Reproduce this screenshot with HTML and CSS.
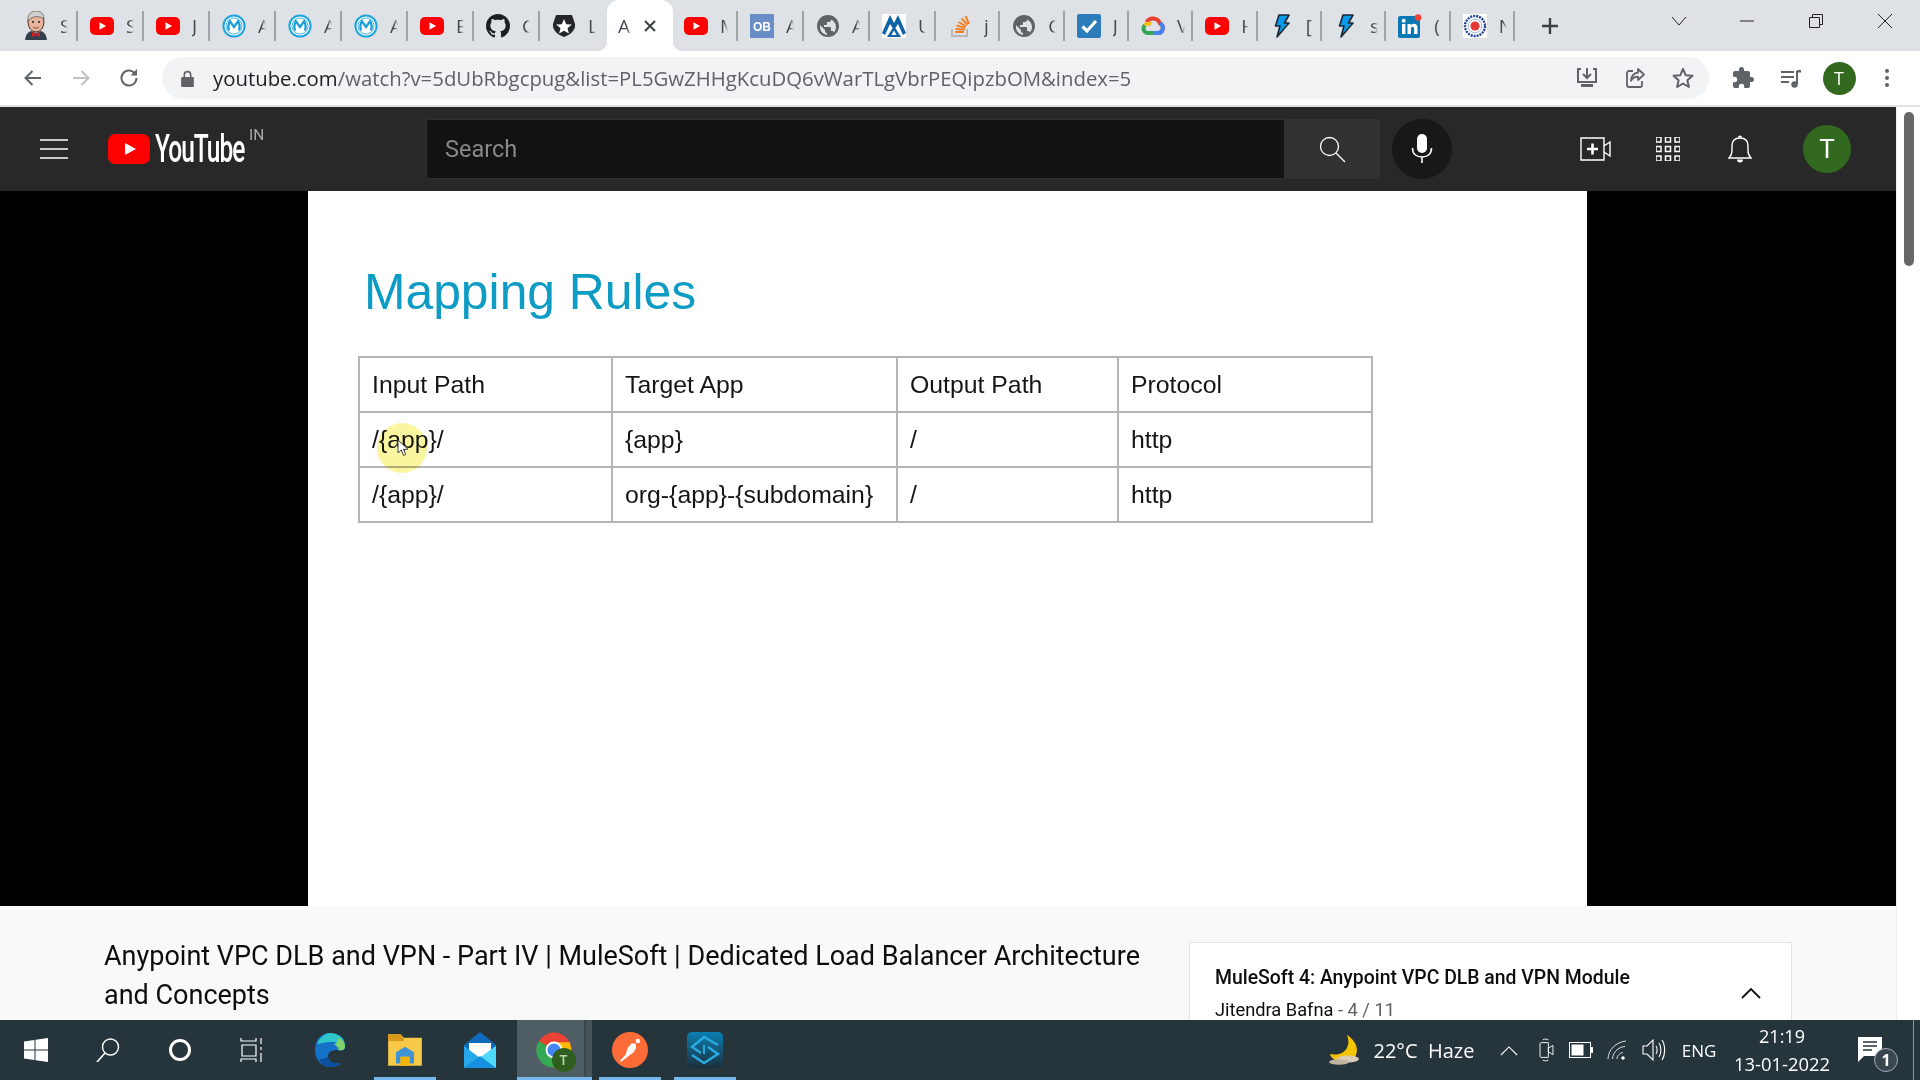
FILE: index.html
```html
<!DOCTYPE html>
<html lang="en">
<head>
  <meta charset="UTF-8" />
  <meta name="viewport" content="width=device-width, initial-scale=1.0"/>
  <title>Anypoint VPC DLB and VPN - Part IV | MuleSoft - YouTube</title>
  <link rel="stylesheet" href="styles.css">
</head>
<body>

  <!-- favicons used more than once -->
  <svg class="defs" aria-hidden="true">
    <symbol id="fav-yt" viewBox="0 0 24 24">
      <rect x="0" y="3" width="24" height="18" rx="5" fill="#f00"/>
      <path d="M9.500 8.200v7.600l6.600-3.800z" fill="#fff"/>
    </symbol>
    <symbol id="fav-mule" viewBox="0 0 24 24">
      <circle cx="12" cy="12" r="10.600" fill="#fff" stroke="#1ea5de" stroke-width="2"/>
      <circle cx="12" cy="12" r="8" fill="none" stroke="#1ea5de" stroke-width="0.800"/>
      <path d="M7 16.500c-1-3.600-.6-6.800.8-9.300L12 13l4.200-5.800c1.400 2.500 1.800 5.700.8 9.300" fill="none" stroke="#1b9fd8" stroke-width="2.300"/>
    </symbol>
    <symbol id="fav-globe" viewBox="0 0 24 24">
      <path fill="#5f6368" d="M12 1C5.900 1 1 5.900 1 12s4.900 11 11 11 11-4.900 11-11S18.100 1 12 1zm-1 19.900c-3.950-.5-7-3.850-7-7.900 0-.62.08-1.210.21-1.790L9 16v1c0 1.100.9 2 2 2v1.900zm6.900-2.500c-.26-.81-1-1.400-1.900-1.400h-1v-3c0-.55-.45-1-1-1H8v-2h2c.55 0 1-.45 1-1V8h2c1.100 0 2-.9 2-2v-.41c2.930 1.190 5 4.060 5 7.410 0 2.080-.8 3.970-2.100 5.400z"/>
    </symbol>
    <symbol id="fav-bolt" viewBox="0 0 24 24">
      <path d="M9 1h10l-4.500 8H19L7 23l3-11H5.500z" fill="#0a9bea" stroke="#1a2a38" stroke-width="1.600" stroke-linejoin="round"/>
    </symbol>
    <symbol id="tb-win" viewBox="0 0 24 24">
      <path fill="#fff" d="M0 3.500 10.500 2v9.500H0zM11.500 1.800 24 0v11.500H11.500zM0 12.500h10.500V22L0 20.500zM11.500 12.500H24V24l-12.500-1.800z"/>
    </symbol>
    <linearGradient id="st-fill" x1="0" y1="0" x2="0" y2="1">
      <stop offset="0" stop-color="#0c7fb3"/>
      <stop offset="1" stop-color="#1b2f3d"/>
    </linearGradient>
  </svg>

  <div class="tabstrip">
    <div class="tab">
      <svg class="favicon favicon-tall" viewBox="0 0 24 30"><path d="M1 29c1-6 3-8 6-9l5 2 5-2c3 1 5 3 6 9z" fill="#33414f"/><ellipse cx="12" cy="11" rx="8" ry="10" fill="#e6b49a" stroke="#4a3428" stroke-width="1"/><path d="M4 10C3 3 8 0 12 0s8 2 8 8c-4-3-11-4-16 2z" fill="#cfcfcf" stroke="#4a3428" stroke-width=".6"/><path d="M8 21l4 2 4-2v5l-4-2-4 2z" fill="#d32020"/><circle cx="9" cy="11" r="1" fill="#222"/><circle cx="15" cy="11" r="1" fill="#222"/><path d="M9 16c2 1.500 4 1.500 6 0" fill="none" stroke="#8a4a38"/></svg>
      <span class="tab-label">S</span>
    </div>
    <div class="tab"><svg class="favicon"><use href="#fav-yt"/></svg><span class="tab-label">S</span></div>
    <div class="tab"><svg class="favicon"><use href="#fav-yt"/></svg><span class="tab-label">J</span></div>
    <div class="tab"><svg class="favicon"><use href="#fav-mule"/></svg><span class="tab-label">A</span></div>
    <div class="tab"><svg class="favicon"><use href="#fav-mule"/></svg><span class="tab-label">A</span></div>
    <div class="tab"><svg class="favicon"><use href="#fav-mule"/></svg><span class="tab-label">A</span></div>
    <div class="tab"><svg class="favicon"><use href="#fav-yt"/></svg><span class="tab-label">B</span></div>
    <div class="tab">
      <svg class="favicon" viewBox="0 0 16 16"><path fill="#1b1f23" d="M8 0C3.580 0 0 3.580 0 8c0 3.540 2.290 6.530 5.470 7.590.4.07.55-.17.55-.38 0-.19-.01-.82-.01-1.490-2.010.37-2.530-.49-2.690-.94-.09-.23-.48-.94-.82-1.130-.28-.15-.68-.52-.01-.53.63-.01 1.080.58 1.230.82.72 1.210 1.870.87 2.330.66.07-.52.28-.87.51-1.070-1.780-.2-3.640-.89-3.640-3.950 0-.87.31-1.590.82-2.150-.08-.2-.36-1.020.08-2.120 0 0 .67-.21 2.200.82.64-.18 1.320-.27 2-.27.68 0 1.360.09 2 .27 1.530-1.040 2.200-.82 2.200-.82.44 1.100.16 1.920.08 2.120.51.56.82 1.270.82 2.150 0 3.070-1.870 3.750-3.650 3.950.29.25.54.73.54 1.480 0 1.070-.01 1.930-.01 2.200 0 .21.15.46.55.38A8.013 8.013 0 0016 8c0-4.420-3.580-8-8-8z"/></svg>
      <span class="tab-label">C</span>
    </div>
    <div class="tab tab-before-active">
      <svg class="favicon" viewBox="0 0 24 24"><path d="M4 1h16l3 9c.8 5-3 10-11 13C4 20 .2 15 1 10z" fill="#23272c"/><path d="M12 5l2.200 5.200 5.600.4-4.300 3.600 1.400 5.400L12 16.700l-4.900 2.900 1.400-5.400-4.300-3.600 5.600-.4z" fill="#fff"/></svg>
      <span class="tab-label">L</span>
    </div>

    <div class="tab-active">
      <span class="tab-label tab-label-active">A</span>
      <svg class="tab-close" viewBox="0 0 14 14"><path d="M2 2l10 10M12 2 2 12" stroke="#3c4043" stroke-width="2"/></svg>
    </div>

    <div class="tab"><svg class="favicon"><use href="#fav-yt"/></svg><span class="tab-label">M</span></div>
    <div class="tab">
      <svg class="favicon" viewBox="0 0 24 24"><rect width="24" height="24" fill="#6a8cc7"/><text x="12" y="17" class="fav-text">OB</text></svg>
      <span class="tab-label">A</span>
    </div>
    <div class="tab"><svg class="favicon"><use href="#fav-globe"/></svg><span class="tab-label">A</span></div>
    <div class="tab">
      <svg class="favicon" viewBox="0 0 24 24"><rect width="24" height="24" fill="#fff"/><path d="M0 19 8 1l4 8 4-8 8 18-3 2-5-11-4 6-4-6-5 11z" fill="#0f62a8"/><path d="M12 12l7 11H5z" fill="#0f62a8"/><path d="M12 16.500l2.600 4.500H9.400z" fill="#fff"/></svg>
      <span class="tab-label">U</span>
    </div>
    <div class="tab tab-narrow">
      <svg class="favicon" viewBox="0 0 24 24"><path d="M4 15v7h15v-7" fill="none" stroke="#b8b8b8" stroke-width="2"/><path d="M7 18h9M7.500 15l9 .8M8.500 11.500l8.600 2.400M10.500 8l7.700 4.500M13.500 4.500l6 6.400M17.500 2l3.500 8" stroke="#f48024" stroke-width="2"/></svg>
      <span class="tab-label">j</span>
    </div>
    <div class="tab tab-narrow"><svg class="favicon"><use href="#fav-globe"/></svg><span class="tab-label">C</span></div>
    <div class="tab tab-narrow">
      <svg class="favicon" viewBox="0 0 24 24"><rect width="24" height="24" rx="2" fill="#2b7cb9"/><path d="M5.500 12.500l4.500 4.500 9-10" fill="none" stroke="#fff" stroke-width="3.200"/></svg>
      <span class="tab-label">J</span>
    </div>
    <div class="tab tab-narrow">
      <svg class="favicon" viewBox="0 0 24 24"><path d="M7 19h10a5 5 0 0 0 2-9.500A7.500 7.500 0 0 0 5.500 8" fill="none" stroke="#ea4335" stroke-width="4"/><path d="M19 9.500A5 5 0 0 1 17 19h-6" fill="none" stroke="#4285f4" stroke-width="4"/><path d="M12 19H7a4.500 4.500 0 0 1-3-7.800" fill="none" stroke="#34a853" stroke-width="4"/><path d="M4 11.200A4.500 4.500 0 0 1 10 10.500" fill="none" stroke="#fbbc05" stroke-width="4"/></svg>
      <span class="tab-label">V</span>
    </div>
    <div class="tab tab-narrow"><svg class="favicon"><use href="#fav-yt"/></svg><span class="tab-label">H</span></div>
    <div class="tab tab-narrow"><svg class="favicon"><use href="#fav-bolt"/></svg><span class="tab-label">[</span></div>
    <div class="tab tab-narrow"><svg class="favicon"><use href="#fav-bolt"/></svg><span class="tab-label">s</span></div>
    <div class="tab tab-narrow">
      <svg class="favicon" viewBox="0 0 24 24"><rect y="2" width="22" height="22" rx="2" fill="#0a78b5"/><rect x="4" y="10" width="3.400" height="10" fill="#fff"/><circle cx="5.700" cy="6.800" r="2" fill="#fff"/><path d="M9.500 10h3.200v1.500c.7-1.100 1.800-1.800 3.300-1.800 2.600 0 3.500 1.700 3.500 4.300V20h-3.400v-5.300c0-1.200-.4-2-1.500-2s-1.700.8-1.700 2V20H9.500z" fill="#fff"/><circle cx="20" cy="3.500" r="3.300" fill="#f44336"/></svg>
      <span class="tab-label">(</span>
    </div>
    <div class="tab tab-narrow">
      <svg class="favicon" viewBox="0 0 24 24"><rect width="24" height="24" fill="#fff"/><circle cx="12" cy="12" r="10" fill="none" stroke="#1c3f94" stroke-width="2.400" stroke-dasharray="2 1"/><circle cx="12" cy="12" r="6.800" fill="#fff" stroke="#8ab" stroke-width=".8"/><circle cx="12" cy="12" r="4.600" fill="#e53935"/></svg>
      <span class="tab-label">N</span>
    </div>

    <svg class="new-tab" viewBox="0 0 18 18"><path d="M9 1v16M1 9h16" stroke="#3c4043" stroke-width="2.400"/></svg>

    <div class="window-controls">
      <svg viewBox="0 0 16 10" class="win-chevron"><path d="M1 1l7 8 7-8" fill="none" stroke="#222" stroke-width="1"/></svg>
      <svg viewBox="0 0 16 16" class="win-btn"><path d="M1 8h14" stroke="#222" stroke-width="1"/></svg>
      <svg viewBox="0 0 16 16" class="win-btn"><path d="M1.500 4.500h10v10h-10zM4.500 4.500v-3h10v10h-3" fill="none" stroke="#222" stroke-width="1"/></svg>
      <svg viewBox="0 0 16 16" class="win-btn"><path d="M1 1l14 14M15 1 1 15" stroke="#222" stroke-width="1"/></svg>
    </div>
  </div>

  <div class="toolbar">
    <div class="tool"><svg viewBox="0 0 24 24"><path d="M20 12H5M11.500 5 4.500 12l7 7" fill="none" stroke="#5f6368" stroke-width="2"/></svg></div>
    <div class="tool"><svg viewBox="0 0 24 24"><path d="M4 12h15M12.500 5l7 7-7 7" fill="none" stroke="#bdc1c6" stroke-width="2"/></svg></div>
    <div class="tool"><svg viewBox="0 0 24 24"><path d="M19.500 12a7.500 7.500 0 1 1-2.200-5.300" fill="none" stroke="#5f6368" stroke-width="2"/><path d="M20 3v6.500h-6.500z" fill="#5f6368"/></svg></div>

    <div class="omnibox">
      <svg class="lock" viewBox="0 0 12 16"><path d="M3 7V4.500a3 3 0 0 1 6 0V7" fill="none" stroke="#5f6368" stroke-width="1.500"/><rect y="6.500" width="12" height="9.500" rx="1.200" fill="#5f6368"/></svg>
      <div class="url"><span class="url-host">youtube.com</span>/watch?v=5dUbRbgcpug&amp;list=PL5GwZHHgKcuDQ6vWarTLgVbrPEQipzbOM&amp;index=5</div>
      <div class="tool"><svg viewBox="0 0 24 24"><path d="M6 3H3v13h18V3h-3" fill="none" stroke="#5f6368" stroke-width="2"/><path d="M12 2v9M8 8l4 4 4-4" fill="none" stroke="#5f6368" stroke-width="2"/><path d="M6 18h12v3H6z" fill="#5f6368"/></svg></div>
      <div class="tool"><svg viewBox="0 0 24 24"><path d="M10 5H6a2 2 0 0 0-2 2v12a2 2 0 0 0 2 2h11a2 2 0 0 0 2-2v-4" fill="none" stroke="#5f6368" stroke-width="1.800"/><path d="M15 3l6 5.500-6 5.500v-3.300c-3.500 0-5.500 1.300-7 4 .3-4.500 2.700-7.500 7-8z" fill="none" stroke="#5f6368" stroke-width="1.800" stroke-linejoin="round"/></svg></div>
      <div class="tool"><svg viewBox="0 0 24 24"><path d="M12 3l2.700 6.200 6.800.6-5.100 4.500 1.500 6.700L12 17.500 6.100 21l1.500-6.700L2.500 9.800l6.800-.6z" fill="none" stroke="#5f6368" stroke-width="2" stroke-linejoin="round"/></svg></div>
    </div>

    <div class="tool tool-first"><svg viewBox="0 0 24 24"><path fill="#5f6368" d="M20.500 11H19V7a2 2 0 0 0-2-2h-4V3.500a2.500 2.500 0 0 0-5 0V5H4a2 2 0 0 0-2 2v3.800h1.500a2.700 2.700 0 0 1 0 5.400H2V20a2 2 0 0 0 2 2h3.800v-1.500a2.700 2.700 0 0 1 5.400 0V22H17a2 2 0 0 0 2-2v-4h1.500a2.500 2.500 0 0 0 0-5z"/></svg></div>
    <div class="tool"><svg viewBox="0 0 24 24"><path d="M2 6h13M2 11h13M2 16h8" stroke="#5f6368" stroke-width="2"/><path d="M18 5v13" stroke="#5f6368" stroke-width="2"/><path d="M18 4h4v2.500h-4z" fill="#5f6368"/><circle cx="15.500" cy="18.500" r="3.200" fill="#5f6368"/></svg></div>
    <div class="tool"><div class="chrome-avatar">T</div></div>
    <div class="tool"><svg viewBox="0 0 24 24"><circle cx="12" cy="5" r="2" fill="#5f6368"/><circle cx="12" cy="12" r="2" fill="#5f6368"/><circle cx="12" cy="19" r="2" fill="#5f6368"/></svg></div>
  </div>

  <div class="viewport">
    <div class="page">
      <header class="yt-header">
        <div class="yt-start">
          <svg class="yt-menu" viewBox="0 0 28 20"><path d="M0 1h28M0 10h28M0 19h28" stroke="#fff" stroke-width="1.300"/></svg>
          <div class="yt-logo">
            <svg class="yt-play" viewBox="0 0 42 30"><rect width="42" height="30" rx="7" fill="#f00"/><path d="M17 9v12l11-6z" fill="#fff"/></svg>
            <span class="yt-wordmark">YouTube</span>
            <span class="yt-country">IN</span>
          </div>
        </div>
        <div class="yt-search">Search</div>
        <div class="yt-search-btn">
          <svg viewBox="0 0 28 28"><circle cx="11.500" cy="11.500" r="9" fill="none" stroke="#fff" stroke-width="1.300"/><path d="M18 18l9 9" stroke="#fff" stroke-width="1.300"/></svg>
        </div>
        <div class="yt-mic">
          <svg viewBox="0 0 24 32"><rect x="7" y="1" width="10" height="19" rx="5" fill="#fff"/><path d="M2.500 15c0 6 4 9 9.500 9s9.500-3 9.500-9M12 24v6" fill="none" stroke="#fff" stroke-width="1.600"/></svg>
        </div>
        <div class="yt-end">
          <div class="yt-action"><svg viewBox="0 0 32 24" class="yt-create"><path d="M1 1h23v22H1zM24 9l6-4v14l-6-4" fill="none" stroke="#fff" stroke-width="1.400"/><path d="M12.500 6.500v11M7 12h11" stroke="#fff" stroke-width="2.600"/></svg></div>
          <div class="yt-action"><svg viewBox="0 0 24 24" class="yt-apps"><path d="M0 0h5v5H0zM9.500 0h5v5h-5zM19 0h5v5h-5zM0 9.500h5v5H0zM9.500 9.500h5v5h-5zM19 9.500h5v5h-5zM0 19h5v5H0zM9.500 19h5v5h-5zM19 19h5v5h-5z" fill="none" stroke="#fff" stroke-width="1.500"/></svg></div>
          <div class="yt-action"><svg viewBox="0 0 24 30" class="yt-bell"><path d="M1 24h22c-2-2-3-4-3-7v-5c0-5-3-8-8-8s-8 3-8 8v5c0 3-1 5-3 7z" fill="none" stroke="#fff" stroke-width="1.400"/><path d="M9 25.500h6a3 3 0 0 1-6 0zM10 3.500a2 2 0 0 1 4 0z" fill="#fff"/></svg></div>
          <div class="yt-avatar">T</div>
        </div>
      </header>

      <div class="player">
        <section class="slide">
          <h1 class="slide-title">Mapping Rules</h1>
          <table class="rules">
            <colgroup><col class="col-input"><col class="col-target"><col class="col-output"><col class="col-protocol"></colgroup>
            <tr><td>Input Path</td><td>Target App</td><td>Output Path</td><td>Protocol</td></tr>
            <tr><td>/{app}/</td><td>{app}</td><td>/</td><td>http</td></tr>
            <tr><td>/{app}/</td><td>org-{app}-{subdomain}</td><td>/</td><td>http</td></tr>
          </table>
          <div class="pointer-glow"></div>
          <svg class="pointer" viewBox="0 0 12 18"><path d="M1 1v13l3.300-3 2.200 5.500 2.200-1-2.200-5.200H11z" fill="#fff" stroke="#444" stroke-width="1"/></svg>
        </section>
      </div>

      <div class="below">
        <h2 class="video-title">Anypoint VPC DLB and VPN - Part IV | MuleSoft | Dedicated Load Balancer Architecture and Concepts</h2>
        <aside class="playlist">
          <div>
            <div class="playlist-title">MuleSoft 4: Anypoint VPC DLB and VPN Module</div>
            <div class="playlist-meta">Jitendra Bafna <span class="playlist-count">- 4 / 11</span></div>
          </div>
          <svg class="playlist-toggle" viewBox="0 0 20 12"><path d="M1 11l9-9 9 9" fill="none" stroke="#111" stroke-width="1.800"/></svg>
        </aside>
      </div>
    </div>

    <div class="scrollbar"><div class="scroll-thumb"></div></div>
  </div>

  <footer class="taskbar">
    <div class="tb-slot"><svg class="tb-small"><use href="#tb-win"/></svg></div>
    <div class="tb-slot"><svg class="tb-small" viewBox="0 0 24 24"><circle cx="14.500" cy="9" r="8" fill="none" stroke="#fff" stroke-width="1.400"/><path d="M9 15 1 24" stroke="#fff" stroke-width="1.600"/></svg></div>
    <div class="tb-slot"><svg class="tb-small" viewBox="0 0 24 24"><circle cx="12" cy="12" r="9.500" fill="none" stroke="#fff" stroke-width="3"/></svg></div>
    <div class="tb-slot"><svg class="tb-small" viewBox="0 0 24 24"><path d="M1 0v3h15V0M2 7h14v11H2zM1 24v-3h15v3M21 0v6M21 9v3M21 15v9" fill="none" stroke="#fff" stroke-width="1.200"/></svg></div>

    <div class="tb-app tb-first">
      <svg class="tb-icon" viewBox="0 0 32 36"><path d="M16 1C7 1 1 8 1 18c0 10 7 17 15 17 4 0 8-1 11-4-6 2-13-1-13-7 0-4 4-6 8-6 5 0 9 2 9-4C31 6 24 1 16 1z" fill="#1473c9"/><path d="M3 12C6 5 11 1 16 1c8 0 15 5 15 13 0 3-2 4-4 4-1-6-6-9-11-8-5 0-10 2-13 2z" fill="#2fc4c8"/><path d="M24 6c5 2 7 5 7 8 0 4-3 4.500-6 4.500-1-3-2-5-5-6 3-1 4-3 4-6.500z" fill="#7fd36a"/><path d="M14 24c0 6 7 9 13 7-3 3-7 4-11 4-6 0-10-4-11-9 2 2 6 1 9-2z" fill="#0d4f9c"/></svg>
    </div>
    <div class="tb-app tb-running">
      <svg class="tb-icon" viewBox="0 0 32 32"><path d="M1 2h11l3 3h16v25H1z" fill="#f8c848"/><path d="M1 2h11l3 3v3H1z" fill="#d99a1b"/><path d="M8 28V18l8-5 8 5v10h-4v-6h-8v6z" fill="#3f93d6"/><path d="M12 22h8v8h-8z" fill="#f4b400"/></svg>
    </div>
    <div class="tb-app">
      <svg class="tb-icon" viewBox="0 0 32 36"><path d="M16 0 32 13v23H0V13z" fill="#0f6cbd"/><path d="M5 11h22v10l-11 8-11-8z" fill="#fff"/><path d="M0 14l16 12 16-12v22H0z" fill="#28a8ea"/><path d="M32 14v22H16l-3-8z" fill="#50d9ff"/><path d="M0 36l16-12 16 12z" fill="#1490df"/></svg>
    </div>
    <div class="tb-app tb-active">
      <div class="chrome-pin">
        <svg class="tb-icon" viewBox="0 0 32 32"><circle cx="16" cy="16" r="15.500" fill="#ea4335"/><path d="M16 16 2.500 8A15.500 15.500 0 0 0 16 31.500z" fill="#34a853"/><path d="M16 16h15.500A15.500 15.500 0 0 1 16 31.500z" fill="#fbbc05"/><path d="M16 9h14l1.500 7H16z" fill="#fbbc05"/><circle cx="16" cy="16" r="7.500" fill="#fff"/><circle cx="16" cy="16" r="5.800" fill="#4285f4"/></svg>
        <span class="chrome-badge">T</span>
      </div>
    </div>
    <div class="tb-app tb-running">
      <svg class="tb-icon" viewBox="0 0 32 32"><circle cx="16" cy="16" r="16" fill="#ff6c37"/><circle cx="23" cy="8" r="2" fill="#fff"/><path d="M21 10.500c1.500 4-1.500 8-5 10l-8 6-1-1 5-5 2-6.500 3.500-4z" fill="#fff"/></svg>
    </div>
    <div class="tb-app tb-running">
      <svg class="tb-icon" viewBox="0 0 36 36"><rect width="36" height="36" rx="5" fill="url(#st-fill)"/><path d="M31 13 17 5 5 15l9 6M21 15l10 7-14 9-12-8" fill="none" stroke="#29abe2" stroke-width="2.400"/><path d="M17 13v9" stroke="#29abe2" stroke-width="2"/></svg>
    </div>

    <div class="tray">
      <svg class="tray-weather" viewBox="0 0 36 32"><path d="M19 1c5 7 3 17-6 20-4 1-8 0-11-1 2 6 9 9 16 7 9-3 13-17 1-26z" fill="#fcd116"/><path d="M2 20c8 2 16-1 18-9 1-4 0-7-1-10 8 5 12 13 9 20-2 6-9 8-15 7-5-1-9-4-11-8z" fill="#f5c400"/><ellipse cx="20" cy="25" rx="11" ry="3.500" fill="#d9cdb8"/><ellipse cx="11" cy="28" rx="10" ry="2.800" fill="#bfb5a0"/></svg>
      <div class="tray-weather-text">22°C&nbsp; Haze</div>
      <div class="tray-icon tray-icon-chevron"><svg viewBox="0 0 20 12" class="tray-chevron"><path d="M1 11l9-9 9 9" fill="none" stroke="#fff" stroke-width="1.200"/></svg></div>
      <div class="tray-icon tray-icon-meet"><svg viewBox="0 0 18 26" class="tray-meet"><path d="M3 5h8v16H3a2 2 0 0 1-1-1V6a2 2 0 0 1 1-1zM11 11l5-3v10l-5-3zM5 2c2-1 4-1 6 0M5 24c2 1 4 1 6 0" fill="none" stroke="#fff" stroke-width="1"/></svg></div>
      <div class="tray-icon"><svg viewBox="0 0 24 16" class="tray-battery"><rect x=".5" y=".5" width="21" height="15" fill="none" stroke="#fff"/><rect x="2.500" y="2.500" width="12" height="11" fill="#fff"/><rect x="22" y="5" width="2" height="6" fill="#fff"/></svg></div>
      <div class="tray-icon"><svg viewBox="0 0 20 20" class="tray-wifi"><path d="M1 19C1 10 9 2 19 1M5.500 19C5.500 13 11 7 18 6.500M10 19c0-3 2.500-6 6-6.500" fill="none" stroke="#dfe3e5" stroke-width="1"/><circle cx="16" cy="18" r="1.800" fill="#fff"/></svg></div>
      <div class="tray-icon"><svg viewBox="0 0 24 24" class="tray-speaker"><path d="M1 8h4l6-6v20l-6-6H1z" fill="none" stroke="#fff" stroke-width="1.100"/><path d="M14 8c1.500 2 1.500 6 0 8M17 5c2.500 3.500 2.500 10.500 0 14M20 2c3.500 5 3.500 15 0 20" fill="none" stroke="#fff" stroke-width="1.100"/></svg></div>
      <div class="tray-lang">ENG</div>
      <div class="tray-clock"><div>21:19</div><div class="tray-date">13-01-2022</div></div>
      <div class="tray-notify">
        <svg viewBox="0 0 24 26"><path d="M0 0h24v19H6l-6 6z" fill="#fff"/><path d="M5 5h14M5 9h14M5 13h9" stroke="#26343c" stroke-width="1.300"/></svg>
        <span class="notify-badge">1</span>
      </div>
      <div class="show-desktop"></div>
    </div>
  </footer>

</body>
</html>
```

FILE: styles.css
```css
* { box-sizing: border-box; }

html, body {
  margin: 0;
  height: 100%;
  overflow: hidden;
}
body {
  display: flex;
  flex-direction: column;
  width: 1920px;
  height: 1080px;
  font-family: "Open Sans", sans-serif;
  background: #fff;
}
.defs { width: 0; height: 0; position: absolute; }

/* tab strip */
.tabstrip {
  display: flex;
  height: 51px;
  flex-shrink: 0;
  padding-left: 13px;
  background: #dee1e6;
}
.tab {
  display: flex;
  align-items: center;
  width: 66px;
  padding-left: 11px;
  flex-shrink: 0;
  background: linear-gradient(#9fa3a8, #9fa3a8) right 1px center / 2px 30px no-repeat;
}
.tab-narrow { width: 64.33px; }
.tab-before-active { background: none; }
.favicon { width: 24px; height: 24px; flex-shrink: 0; }
.favicon-tall { height: 30px; }
.fav-text { fill: #fff; font: bold 12px "Liberation Sans", sans-serif; text-anchor: middle; }
.tab-label {
  width: 8px;
  margin-left: 12px;
  overflow: hidden;
  font-size: 19px;
  color: #45494e;
  white-space: nowrap;
  -webkit-mask-image: linear-gradient(90deg, #000 50%, transparent);
  mask-image: linear-gradient(90deg, #000 50%, transparent);
}
.tab-active {
  position: relative;
  display: flex;
  align-items: center;
  width: 66px;
  flex-shrink: 0;
  padding-left: 11px;
  background: #fff;
  border-radius: 12px 12px 0 0;
}
.tab-active::before, .tab-active::after {
  content: "";
  position: absolute;
  bottom: 0;
  width: 10px;
  height: 10px;
}
.tab-active::before { left: -10px; background: radial-gradient(circle at 0 0, #dee1e6 10px, #fff 10.500px); }
.tab-active::after { right: -10px; background: radial-gradient(circle at 100% 0, #dee1e6 10px, #fff 10.500px); }
.tab-label-active { margin-left: 0; width: 16px; font-size: 19px; }
.tab-close { width: 14px; height: 14px; margin-left: 9px; }
.new-tab { width: 18px; height: 18px; margin: 17px 0 0 25px; flex-shrink: 0; }
.window-controls {
  display: flex;
  margin-left: auto;
  align-items: center;
  height: 42px;
}
.window-controls svg { flex-shrink: 0; }
.win-chevron { width: 16px; height: 10px; margin-right: 52px; }
.win-btn { width: 16px; height: 16px; margin-right: 53px; }
.win-btn:last-child { margin-right: 27px; }

/* toolbar */
.toolbar {
  display: flex;
  align-items: center;
  height: 54px;
  flex-shrink: 0;
  padding-left: 9px;
  background: #fff;
}
.tool {
  display: flex;
  align-items: center;
  justify-content: center;
  width: 48px;
  height: 42px;
  flex-shrink: 0;
}
.tool svg { width: 24px; height: 24px; }
.tool-first { margin-left: 10px; }
.omnibox {
  display: flex;
  align-items: center;
  width: 1547px;
  height: 42px;
  margin-left: 9px;
  padding: 0 2px 0 19px;
  border-radius: 21px;
  background: #f1f3f4;
}
.lock { width: 13px; height: 17px; flex-shrink: 0; }
.url {
  flex: 1;
  margin-left: 19px;
  font-size: 20.350px;
  color: #5f6368;
  white-space: nowrap;
}
.url-host { color: #202124; }
.chrome-avatar {
  width: 33px;
  height: 33px;
  border-radius: 50%;
  background: #33691e;
  color: #fff;
  font-size: 18px;
  line-height: 33px;
  text-align: center;
}

/* page area */
.viewport {
  display: flex;
  height: 915px;
  flex-shrink: 0;
  border-top: 2px solid #e2e2e2;
}
.page {
  display: flex;
  flex-direction: column;
  width: 1896px;
  flex-shrink: 0;
  overflow: hidden;
}
.scrollbar { flex: 1; padding: 5px 6px 0 7px; background: #fff; border-left: 1px solid #eee; }
.scroll-thumb { height: 154px; border-radius: 6px; background: #676767; }

/* youtube masthead */
.yt-header {
  display: flex;
  align-items: center;
  height: 84px;
  flex-shrink: 0;
  background: #282828;
}
.yt-start {
  display: flex;
  align-items: center;
  width: 426px;
  flex-shrink: 0;
  padding-left: 40px;
}
.yt-menu { width: 28px; height: 20px; flex-shrink: 0; }
.yt-logo { display: flex; margin-left: 40px; align-items: flex-start; }
.yt-play { width: 42px; height: 30px; flex-shrink: 0; }
.yt-wordmark {
  width: 88px;
  margin-left: 5px;
  font: 500 38px/31px Roboto, sans-serif;
  letter-spacing: -1.500px;
  color: #fff;
  white-space: nowrap;
  transform: scaleX(.645);
  transform-origin: left center;
}
.yt-country {
  margin: -7px 0 0 6px;
  font: 400 15.500px/16px Roboto, sans-serif;
  color: #aaa;
}
.yt-search {
  width: 859px;
  height: 60px;
  padding-left: 18px;
  border: 1px solid #303030;
  border-radius: 2px 0 0 2px;
  background: #121212;
  color: #888;
  font: 400 23.500px/58px Roboto, sans-serif;
}
.yt-search-btn {
  display: flex;
  align-items: center;
  justify-content: center;
  width: 95px;
  height: 60px;
  padding-right: 2px;
  background: #313131;
  border-radius: 0 2px 2px 0;
}
.yt-search-btn svg { width: 28px; height: 28px; }
.yt-mic {
  display: flex;
  align-items: center;
  justify-content: center;
  width: 60px;
  height: 60px;
  margin-left: 12px;
  border-radius: 50%;
  background: #181818;
}
.yt-mic svg { width: 24px; height: 32px; }
.yt-end { display: flex; align-items: center; margin-left: auto; padding-right: 45px; }
.yt-action { display: flex; justify-content: center; width: 72px; }
.yt-create { width: 32px; height: 24px; }
.yt-apps { width: 24px; height: 24px; }
.yt-bell { width: 24px; height: 30px; }
.yt-avatar {
  width: 48px;
  height: 48px;
  margin-left: 27px;
  border-radius: 50%;
  background: #33691e;
  color: #fff;
  font: 400 26px/48px Roboto, sans-serif;
  text-align: center;
}

/* video frame */
.player {
  display: flex;
  justify-content: center;
  height: 715px;
  flex-shrink: 0;
  background: #000;
}
.slide {
  position: relative;
  width: 1279px;
  padding: 71px 0 0 50px;
  margin-right: 1px;
  background: #fff;
  font-family: "Liberation Sans", Arial, sans-serif;
}
.slide-title {
  margin: 0 0 34px 6px;
  font-size: 49.800px;
  line-height: 60px;
  font-weight: 400;
  color: #0e9cc4;
}
.rules {
  border-collapse: collapse;
  table-layout: fixed;
  width: 1013px;
  font-size: 24.800px;
  color: #151515;
}
.col-input { width: 253px; }
.col-target { width: 285px; }
.col-output { width: 221px; }
.col-protocol { width: 254px; }
.rules td {
  height: 55px;
  padding: 0 0 0 12px;
  border: 2px solid #b5b5b5;
}
.pointer-glow {
  position: absolute;
  left: 69px;
  top: 232px;
  width: 50px;
  height: 50px;
  border-radius: 50%;
  background: #faf6a0;
  mix-blend-mode: multiply;
}
.pointer {
  position: absolute;
  left: 89px;
  top: 248px;
  width: 12px;
  height: 18px;
}

/* under the video */
.below {
  display: flex;
  flex: 1;
  padding-left: 104px;
  background: #f9f9f9;
  overflow: hidden;
}
.video-title {
  width: 1050px;
  flex-shrink: 0;
  margin: 31px 35px 0 0;
  font: 400 27px/39px Roboto, sans-serif;
  color: #0d0d0d;
}
.playlist {
  display: flex;
  width: 603px;
  height: 120px;
  margin-top: 36px;
  padding: 20px 26px 0 25px;
  justify-content: space-between;
  background: #fff;
  border: 1px solid #e3e3e3;
  font-family: Roboto, sans-serif;
}
.playlist-title { font-size: 19.400px; line-height: 29px; font-weight: 500; color: #0d0d0d; }
.playlist-meta { margin-top: 5px; font-size: 18.250px; line-height: 25px; color: #0d0d0d; }
.playlist-count { color: #606060; }
.playlist-toggle { width: 20px; height: 12px; margin: 24px 4px 0 0; }

/* windows taskbar */
.taskbar {
  display: flex;
  align-items: stretch;
  height: 60px;
  flex-shrink: 0;
  background: #26343c;
  color: #fff;
}
.tb-slot { display: flex; align-items: center; justify-content: center; width: 72px; }
.tb-small { width: 24px; height: 24px; }
.tb-app {
  display: flex;
  align-items: center;
  justify-content: center;
  width: 75px;
}
.tb-first { margin-left: 4px; }
.tb-icon { width: 36px; height: 36px; display: block; }
.tb-running { background: linear-gradient(#76b9ed, #76b9ed) center bottom / 62px 3px no-repeat; }
.tb-active {
  padding-right: 2px;
  background:
    linear-gradient(#76b9ed, #76b9ed) center bottom / 100% 3px no-repeat,
    linear-gradient(90deg, #4f5d64 67px, #38454c 67px 69px, #465359 69px);
}
.chrome-pin { position: relative; }
.chrome-badge {
  position: absolute;
  right: -4px;
  bottom: -4px;
  width: 24px;
  height: 24px;
  border-radius: 50%;
  background: #2f5f1e;
  color: #b9d4a8;
  font-size: 14px;
  font-weight: 600;
  line-height: 24px;
  text-align: center;
}
.tray { display: flex; align-items: center; margin-left: auto; }
.tray-weather { width: 36px; height: 32px; flex-shrink: 0; }
.tray-weather-text { width: 116px; margin-left: 10px; font-size: 20px; white-space: nowrap; }
.tray-icon { display: flex; justify-content: center; width: 36.500px; }
.tray-icon-chevron { padding-left: 3px; }
.tray-icon-meet { padding-left: 5px; }
.tray-chevron { width: 18px; height: 11px; }
.tray-meet { width: 17px; height: 24px; }
.tray-battery { width: 24px; height: 16px; }
.tray-wifi { width: 20px; height: 20px; }
.tray-speaker { width: 24px; height: 24px; }
.tray-lang { width: 50px; margin-left: 2px; font-size: 17px; text-align: center; }
.tray-clock {
  width: 110px;
  margin: 0 9px 0 3px;
  font-size: 18px;
  line-height: 27px;
  text-align: center;
}
.tray-date { font-size: 18.400px; }
.tray-notify { position: relative; width: 48px; height: 26px; margin-right: 19px; }
.tray-notify svg { width: 24px; height: 26px; margin-left: 12px; display: block; }
.notify-badge {
  position: absolute;
  left: 28px;
  top: 11px;
  width: 24px;
  height: 24px;
  border-radius: 50%;
  background: #3a474e;
  border: 1px solid #aab;
  font-size: 16px;
  font-weight: 700;
  line-height: 22px;
  text-align: center;
}
.show-desktop { width: 1px; height: 60px; margin-right: 6px; background: #8a949a; }
```
